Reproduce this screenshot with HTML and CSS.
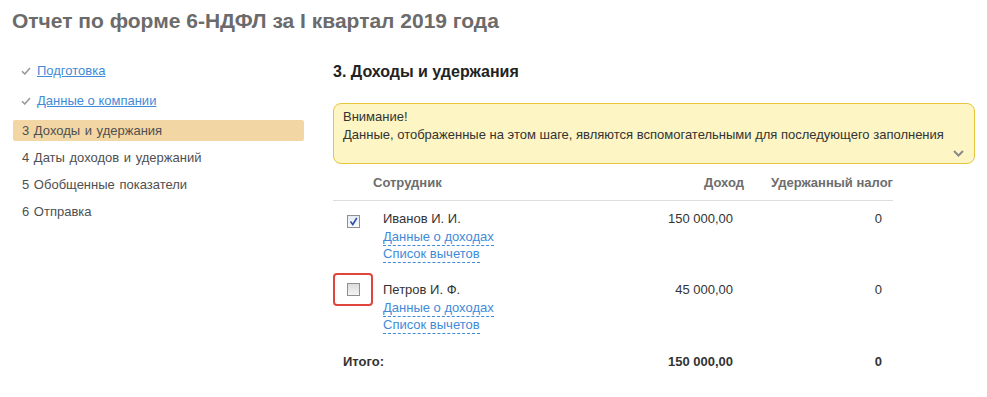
FILE: index.html
```html
<!DOCTYPE html>
<html lang="ru">
<head>
<meta charset="utf-8">
<title>Отчет по форме 6-НДФЛ</title>
<link rel="stylesheet" href="styles.css">
</head>
<body>
<div class="page">
  <h1 class="title">Отчет по форме 6-НДФЛ за I квартал 2019 года</h1>
  <div class="layout">
    <nav class="steps">
      <div class="step done">
        <svg class="check" width="10" height="8" viewBox="0 0 10 8"><path d="M1 4.2 L3.8 7 L9 1" fill="none" stroke="#9a9a9a" stroke-width="1.6"/></svg>
        <a href="#" class="step-link">Подготовка</a>
      </div>
      <div class="step done">
        <svg class="check" width="10" height="8" viewBox="0 0 10 8"><path d="M1 4.2 L3.8 7 L9 1" fill="none" stroke="#9a9a9a" stroke-width="1.6"/></svg>
        <a href="#" class="step-link">Данные о компании</a>
      </div>
      <div class="step current">3 Доходы и удержания</div>
      <div class="step">4 Даты доходов и удержаний</div>
      <div class="step">5 Обобщенные показатели</div>
      <div class="step">6 Отправка</div>
    </nav>
    <main class="content">
      <h2 class="section-title">3. Доходы и удержания</h2>
      <div class="notice">
        <div class="notice-line">Внимание!</div>
        <div class="notice-line">Данные, отображенные на этом шаге, являются вспомогательными для последующего заполнения</div>
        <svg class="chevron" width="11" height="7" viewBox="0 0 11 7"><path d="M1 1 L5.5 5.5 L10 1" fill="none" stroke="#8a8a8a" stroke-width="2"/></svg>
      </div>
      <div class="table">
        <div class="thead">
          <div class="th"></div>
          <div class="th">Сотрудник</div>
          <div class="th num">Доход</div>
          <div class="th num">Удержанный налог</div>
        </div>
        <div class="row">
          <div class="cell cb-cell"><span class="cb checked"><svg width="9" height="9" viewBox="0 0 9 9"><path d="M1.5 4.5 L3.8 7.5 L7.8 1" fill="none" stroke="#2f52a8" stroke-width="1.6"/></svg></span></div>
          <div class="cell name">
            <div class="person">Иванов И. И.</div>
            <a href="#" class="dlink">Данные о доходах</a>
            <a href="#" class="dlink">Список вычетов</a>
          </div>
          <div class="cell num val">150 000,00</div>
          <div class="cell num val">0</div>
        </div>
        <div class="row">
          <div class="cell cb-cell"><span class="highlight"><span class="cb"></span></span></div>
          <div class="cell name">
            <div class="person">Петров И. Ф.</div>
            <a href="#" class="dlink">Данные о доходах</a>
            <a href="#" class="dlink">Список вычетов</a>
          </div>
          <div class="cell num val">45 000,00</div>
          <div class="cell num val">0</div>
        </div>
        <div class="row total">
          <div class="cell total-label">Итого:</div>
          <div class="cell num val">150 000,00</div>
          <div class="cell num val">0</div>
        </div>
      </div>
    </main>
  </div>
</div>
</body>
</html>
```
FILE: styles.css
```css
* { box-sizing: border-box; }
body {
  margin: 0;
  background: #fff;
  font-family: "Liberation Sans", Arial, sans-serif;
  font-size: 13px;
  color: #333;
}
.page { padding: 9px 0 0 12px; }
.title {
  margin: 0;
  font-size: 21px;
  font-weight: bold;
  color: #6b6b6b;
  line-height: 24px;
}
.layout {
  display: flex;
  margin-top: 27px;
}
.steps {
  width: 291px;
  display: flex;
  flex-direction: column;
  margin-left: 1px;
}
.step {
  height: 21px;
  line-height: 21px;
  padding-left: 9px;
  color: #4f4f4f;
  margin-bottom: 6px;
  border-radius: 2px;
  word-spacing: 1px;
}
.step.done { display: flex; align-items: center; gap: 6px; padding-left: 8px; margin-bottom: 9px; word-spacing: 0; }
.step.current { background: #f2d7a5; }
.step-link { color: #3f8bd8; text-decoration: underline; }
.check { flex: none; }
.content {
  margin-left: 29px;
  width: 642px;
}
.section-title {
  margin: 0;
  font-size: 16px;
  font-weight: bold;
  color: #222;
  line-height: 20px;
  margin-top: 2px;
}
.notice {
  position: relative;
  margin-top: 21px;
  background: #fdf5c3;
  border: 1px solid #e7c53c;
  border-radius: 8px;
  padding: 4px 9px 9px 9px;
  color: #333;
  line-height: 18px;
  height: 61px;
}
.chevron { position: absolute; right: 10px; bottom: 6px; }
.table { width: 560px; margin-top: 9px; }
.thead, .row {
  display: grid;
  grid-template-columns: 40px 1fr 120px 149px;
}
.thead {
  border-bottom: 1px solid #ddd;
  height: 28px;
}
.th { font-weight: bold; color: #6d6d6d; line-height: 20px; }
.num { text-align: right; }
.row { padding-top: 9px; padding-bottom: 9px; }
.cell { line-height: 17px; }
.val { padding-right: 11px; }
.cb-cell { display: flex; justify-content: center; padding-top: 5px; }
.name { padding-left: 10px; display: flex; flex-direction: column; align-items: flex-start; }
.person { color: #333; margin-bottom: 2px; }
.dlink {
  color: #3f8bd8;
  text-decoration: none;
  border-bottom: 1px dashed #3f8bd8;
  line-height: 16px;
}
.cb {
  display: inline-flex;
  align-items: center;
  justify-content: center;
  width: 13px;
  height: 13px;
  border: 1px solid #8e8f8f;
  background: linear-gradient(#dcdcdc, #f4f4f4);
}
.cb.checked { background: linear-gradient(#e6ebf5, #f8f9fb); }
.highlight {
  display: flex;
  align-items: center;
  justify-content: center;
  width: 41px;
  height: 33px;
  border: 2px solid #e0453d;
  border-radius: 4px;
  margin-top: -13px;
}
.row.total { grid-template-columns: 291px 120px 149px; padding-top: 10px; font-weight: bold; }
.total-label { padding-left: 10px; }
```
